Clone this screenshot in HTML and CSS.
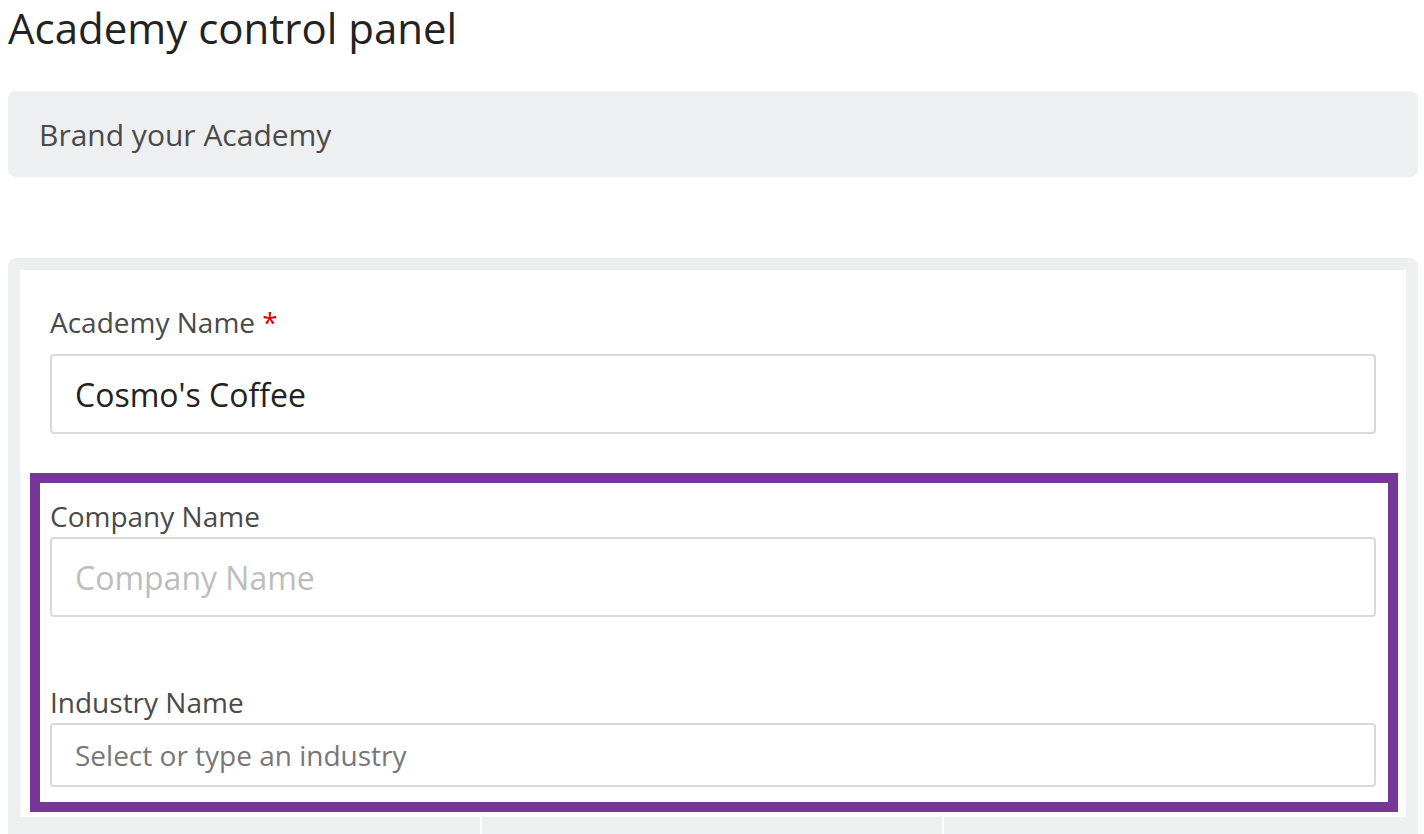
FILE: index.html
```html
<!DOCTYPE html>
<html lang="en">
<head>
<meta charset="utf-8">
<title>Academy control panel</title>
<link rel="stylesheet" href="styles.css">
</head>
<body>
  <h1 class="page-title">Academy control panel</h1>
  <div class="section-bar">Brand your Academy</div>
  <div class="panel">
    <div class="panel-inner">
      <div class="field">
        <label class="field-label">Academy Name <span class="req">*</span></label>
        <div class="input input-lg value">Cosmo's Coffee</div>
      </div>
      <div class="highlight">
        <div class="field">
          <label class="field-label">Company Name</label>
          <div class="input input-lg placeholder">Company Name</div>
        </div>
        <div class="field field-spaced">
          <label class="field-label">Industry Name</label>
          <div class="input input-md placeholder-dark">Select or type an industry</div>
        </div>
      </div>
    </div>
  </div>
  <div class="cells">
    <div class="cell"></div>
    <div class="cell"></div>
    <div class="cell"></div>
  </div>
</body>
</html>
```

FILE: styles.css
```css
html, body {
  margin: 0;
  padding: 0;
  background: #ffffff;
  overflow: hidden;
}
body {
  font-family: "Open Sans", "Noto Sans", sans-serif;
  color: #4a4a4a;
  padding: 0 6px 0 8px;
  height: 834px;
}
.page-title {
  margin: 0;
  font-weight: 400;
  font-size: 42px;
  line-height: 56px;
  color: #222222;
}
.section-bar {
  margin-top: 35px;
  height: 86px;
  background: #eeeff1;
  border-radius: 8px;
  display: flex;
  align-items: center;
  padding-left: 31px;
  font-size: 30px;
  color: #4a4a4a;
}
.panel {
  margin-top: 81px;
  background: #eeeff1;
  border-radius: 8px 8px 0 0;
  padding: 12px 12px 0 12px;
}
.panel-inner {
  background: #ffffff;
  padding: 34px 30px 5px 30px;
}
.field-label {
  display: block;
  font-size: 28px;
  line-height: 36px;
  color: #4a4a4a;
  margin-bottom: 14px;
}
.req {
  color: #e00000;
}
.input {
  border: 2px solid #d9d9d9;
  border-radius: 4px;
  display: flex;
  align-items: center;
  padding-left: 23px;
  box-sizing: border-box;
}
.input-lg {
  height: 80px;
  font-size: 32px;
}
.input-md {
  height: 64px;
  font-size: 28px;
}
.value { color: #222222; }
.placeholder { color: #bdbdbd; }
.placeholder-dark { color: #777777; }
.highlight {
  margin: 39px -22px 0 -20px;
  border: 10px solid #773797;
  padding: 15px 12px 15px 10px;
}
.highlight .field-label {
  margin-bottom: 3px;
}
.field-spaced {
  margin-top: 67px;
}
.cells {
  display: grid;
  grid-template-columns: 472px 460px 1fr;
  column-gap: 2px;
  height: 40px;
}
.cell {
  background: #eeeff1;
}
```
